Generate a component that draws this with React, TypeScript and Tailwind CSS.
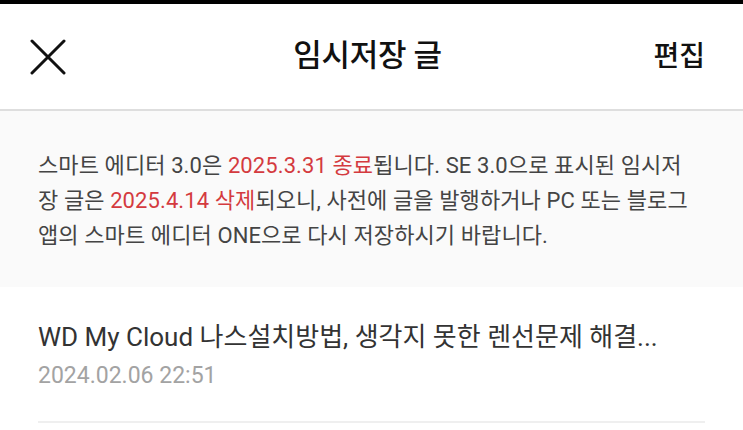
import React from 'react';

const font = { fontFamily: 'Roboto, "Noto Sans CJK KR", sans-serif' };

const Red = ({ children }: { children: React.ReactNode }) => (
  <span className="text-[#d43a3f]">{children}</span>
);

const CloseIcon = () => (
  <svg width="36" height="36" viewBox="0 0 36 36" fill="none">
    <path d="M2 2 L34 34 M34 2 L2 34" stroke="#111" strokeWidth="3" strokeLinecap="round" />
  </svg>
);

export default function App() {
  return (
    <div className="w-[743px] h-[430px] overflow-hidden bg-white flex flex-col" style={font}>
      <div className="h-[4px] bg-black shrink-0" />
      <header className="h-[107px] shrink-0 grid grid-cols-[1fr_auto_1fr] items-center pl-[30px] pr-[38px] border-b-2 border-[#dedede]">
        <button className="w-[36px] h-[36px] flex items-center justify-center">
          <CloseIcon />
        </button>
        <h1 className="text-[31px] font-medium text-[#111] tracking-[-0.3px]">임시저장 글</h1>
        <button className="text-[28px] font-medium text-[#111] justify-self-end">편집</button>
      </header>
      <section className="bg-[#fafafa] h-[176px] shrink-0 flex items-center px-[38px]">
        <p className="text-[22px] leading-[35px] text-[#444] tracking-[0.1px] pt-[3px] whitespace-nowrap">
          스마트 에디터 3.0은 <Red>2025.3.31 종료</Red>됩니다. SE 3.0으로 표시된 임시저
          <br />
          장 글은 <Red>2025.4.14 삭제</Red>되오니, 사전에 글을 발행하거나 PC 또는 블로그
          <br />
          앱의 스마트 에디터 ONE으로 다시 저장하시기 바랍니다.
        </p>
      </section>
      <div className="px-[38px]">
        <div className="border-b-2 border-[#efefef] pt-[32px] pb-[30px]">
          <div className="text-[26px] leading-[36px] text-[#333] whitespace-nowrap">
            WD My Cloud 나스설치방법, 생각지 못한 렌선문제 해결...
          </div>
          <div className="text-[23px] leading-[30px] text-[#a3a3a3] mt-[6px]">2024.02.06 22:51</div>
        </div>
      </div>
    </div>
  );
}
